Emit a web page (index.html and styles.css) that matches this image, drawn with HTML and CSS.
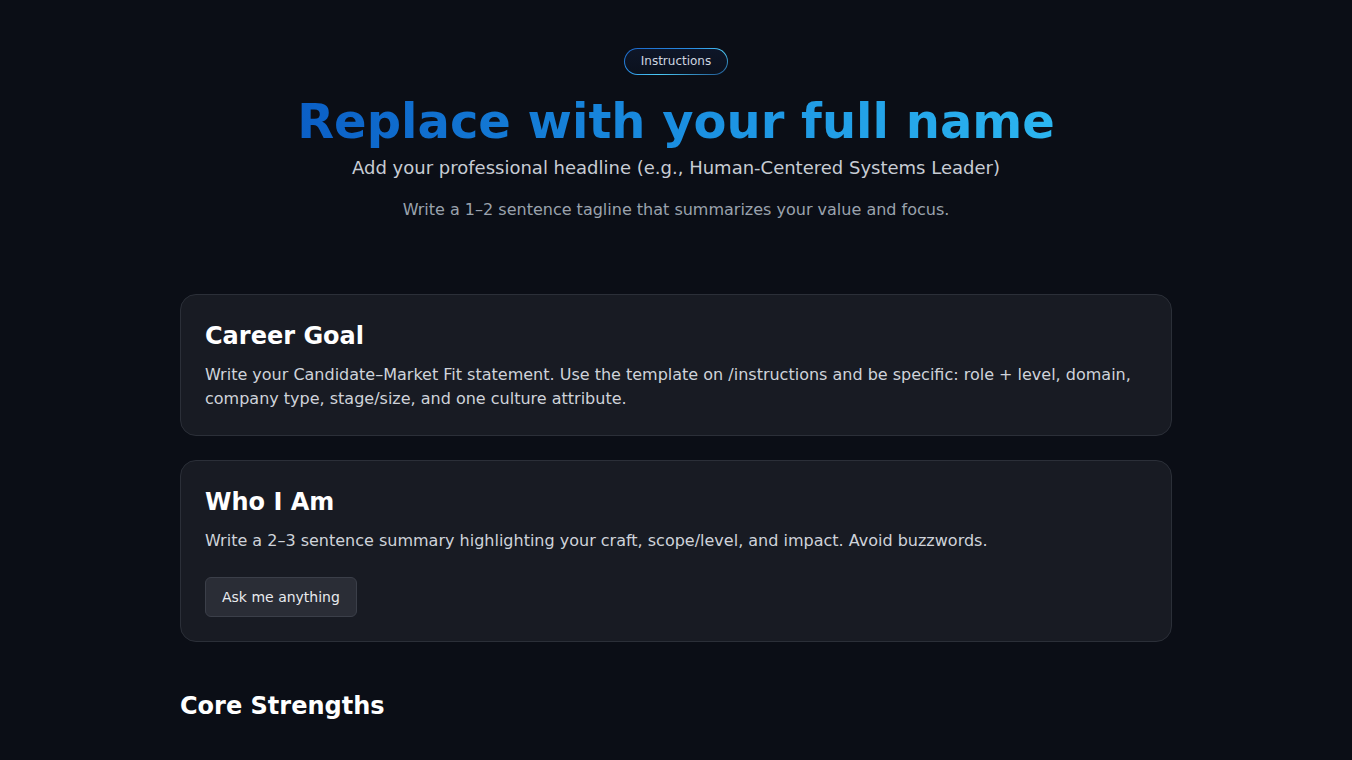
FILE: index.html
```html
<!DOCTYPE html>
<html lang="en">
<head>
<meta charset="utf-8">
<title>Profile</title>
<link rel="stylesheet" href="styles.css">
</head>
<body>
<main class="page">
  <header class="hero">
    <a class="badge" href="#"><span class="badge-inner">Instructions</span></a>
    <h1 class="name">Replace with your full name</h1>
    <p class="headline">Add your professional headline (e.g., Human-Centered Systems Leader)</p>
    <p class="tagline">Write a 1–2 sentence tagline that summarizes your value and focus.</p>
  </header>

  <section class="card">
    <h2 class="card-title">Career Goal</h2>
    <p class="card-text">Write your Candidate–Market Fit statement. Use the template on /instructions and be specific: role + level, domain, company type, stage/size, and one culture attribute.</p>
  </section>

  <section class="card">
    <h2 class="card-title">Who I Am</h2>
    <p class="card-text">Write a 2–3 sentence summary highlighting your craft, scope/level, and impact. Avoid buzzwords.</p>
    <button class="btn" type="button">Ask me anything</button>
  </section>

  <h2 class="section-title">Core Strengths</h2>
</main>
</body>
</html>
```

FILE: styles.css
```css
html, body {
  margin: 0;
  padding: 0;
  background: #0b0e16;
}
body {
  font-family: "DejaVu Sans", "Liberation Sans", sans-serif;
  color: #e6e8ec;
}
.page {
  width: 992px;
  margin: 0 auto;
  padding: 48px 0 40px;
  display: flex;
  flex-direction: column;
}
.hero {
  display: flex;
  flex-direction: column;
  align-items: center;
  text-align: center;
  margin-bottom: 72px;
}
.badge {
  display: inline-flex;
  padding: 1px;
  border-radius: 14px;
  background: linear-gradient(160deg, #1a64c8 0%, #2a8ee2 40%, #4ccaf5 60%, #1d4f8a 100%);
  text-decoration: none;
}
.badge-inner {
  display: block;
  height: 25px;
  line-height: 25px;
  padding: 0 16px;
  border-radius: 13px;
  background: linear-gradient(180deg, #0e1628 0%, #0b111d 100%);
  color: #cfd6e0;
  font-size: 12px;
}
.name {
  margin: 18px 0 0;
  font-size: 48px;
  line-height: 56px;
  font-weight: 700;
  background: linear-gradient(90deg, #0b5fc6 0%, #1a8ee0 50%, #2cb6f0 100%);
  -webkit-background-clip: text;
  background-clip: text;
  color: transparent;
}
.headline {
  margin: 5px 0 0;
  font-size: 18px;
  line-height: 28px;
  color: #c7ccd4;
}
.tagline {
  margin: 16px 0 0;
  font-size: 16px;
  line-height: 24px;
  color: #9aa2ad;
}
.card {
  background: #181b23;
  border: 1px solid #2b2f38;
  border-radius: 16px;
  padding: 25px 24px 24px;
  margin-bottom: 24px;
}
.card-title {
  margin: 0 0 11px;
  font-size: 24px;
  line-height: 32px;
  font-weight: 700;
  color: #ffffff;
}
.card-text {
  margin: 0;
  font-size: 16px;
  line-height: 24px;
  color: #cfd3da;
}
.btn {
  margin-top: 24px;
  align-self: flex-start;
  height: 40px;
  padding: 0 16px;
  background: #2a2d36;
  border: 1px solid #3b3f49;
  border-radius: 6px;
  color: #e8eaee;
  font-family: inherit;
  font-size: 14px;
}
.section-title {
  margin: 24px 0 0;
  font-size: 24px;
  line-height: 32px;
  font-weight: 700;
  color: #ffffff;
}
```
